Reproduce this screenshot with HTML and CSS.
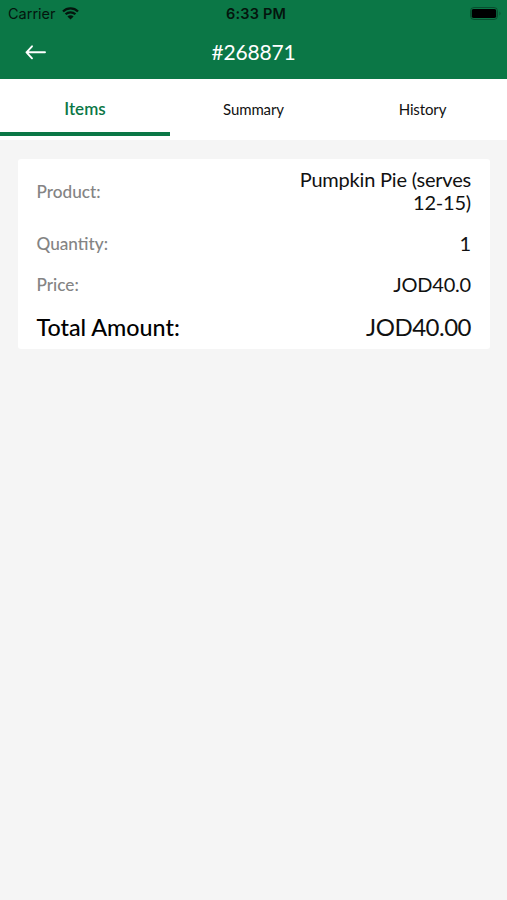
FILE: index.html
```html
<!DOCTYPE html>
<html lang="en">
<head>
<meta charset="utf-8">
<title>Order #268871</title>
<link rel="stylesheet" href="styles.css">
</head>
<body>
<header class="header">
  <div class="status">
    <div class="carrier"><span>Carrier</span>
      <svg class="wifi" viewBox="0 0 17 13" width="17" height="13"><path d="M1 4.500a10.800 10.800 0 0 1 15 0M3.600 7.300a7 7 0 0 1 9.800 0" fill="none" stroke="currentColor" stroke-width="2.300"/><path d="M5.400 9.500a4.400 4.400 0 0 1 6.200 0L8.500 12.600z" fill="currentColor"/></svg>
    </div>
    <time class="time">6:33 PM</time>
    <svg class="battery" viewBox="0 0 32 13" width="32" height="13"><rect x=".5" y=".5" width="27" height="12" rx="3.500" fill="none" stroke="currentColor" stroke-opacity=".4"/><rect x="1.700" y="2" width="24.500" height="9" rx="1.800" fill="#000"/><path d="M29.500 4.500q2 2 0 4z" fill="currentColor" opacity=".4"/></svg>
  </div>
  <div class="bar">
    <svg class="back" viewBox="0 0 22 16" width="22" height="16"><path d="M20 8.300H1.500M7 2.300L1.500 8.300L7 14.300" fill="none" stroke="currentColor" stroke-width="1.900" stroke-linecap="round" stroke-linejoin="round"/></svg>
    <h1 class="title">#268871</h1>
  </div>
</header>
<nav class="tabs">
  <div class="tab active">Items</div>
  <div class="tab">Summary</div>
  <div class="tab">History</div>
</nav>
<main class="card">
  <div class="row product"><span class="label">Product:</span><span class="value">Pumpkin Pie (serves 12-15)</span></div>
  <div class="row quantity"><span class="label">Quantity:</span><span class="value">1</span></div>
  <div class="row price"><span class="label">Price:</span><span class="value">JOD40.0</span></div>
  <div class="row total"><span class="label">Total Amount:</span><span class="value">JOD40.00</span></div>
</main>
</body>
</html>
```
FILE: styles.css
```css
* { box-sizing: border-box; }
body { margin: 0; min-height: 900px; background: #f5f5f5; color: #111; font-family: Lato, sans-serif; }
.header { height: 79px; background: #0b7746; }
.status { height: 27px; display: grid; grid-template-columns: 1fr auto 1fr; align-items: center; padding: 0 5px 0 8px; font: 14.500px/27px Inter, sans-serif; color: #04150d; }
.carrier { display: flex; align-items: center; gap: 6px; }
.wifi { margin-top: -1px; }
.time { font-weight: 600; letter-spacing: .2px; padding-left: 2px; }
.battery { justify-self: end; margin-top: -1px; }
.bar { height: 50px; display: grid; grid-template-columns: 1fr auto 1fr; align-items: center; padding: 0 25px; color: #fff; }
.title { margin: 0; font-size: 21px; font-weight: 400; line-height: 50px; letter-spacing: -.2px; }
.tabs { height: 61px; display: grid; grid-template-columns: repeat(3, 1fr); background: #fff; }
.tab { display: flex; align-items: center; justify-content: center; font-size: 15px; letter-spacing: -.12px; padding: 0 0 2px; }
.active { border-top: 4px solid transparent; border-bottom: 4px solid #0b7746; margin-bottom: 4px; margin-right: -1px; padding: 1px 0 0; color: #0b7746; font-size: 17px; font-weight: 600; letter-spacing: 0; }
.card { margin: 19px 17px 0 18px; height: 190px; padding: 8px 19px 0; background: #fff; border-radius: 3px; }
.row { display: flex; align-items: center; justify-content: space-between; }
.label { margin-left: -.5px; font-size: 17.200px; font-weight: 500; color: #848484; }
.value { font-size: 20px; line-height: 23px; letter-spacing: -.2px; text-align: right; }
.product { height: 48px; }
.product .value { width: 190px; }
.quantity { height: 57px; }
.price { height: 25px; }
.total { height: 59px; }
.total .label { font-size: 23.300px; color: #000; }
.total .value { font-size: 24px; letter-spacing: -.5px; }
```
